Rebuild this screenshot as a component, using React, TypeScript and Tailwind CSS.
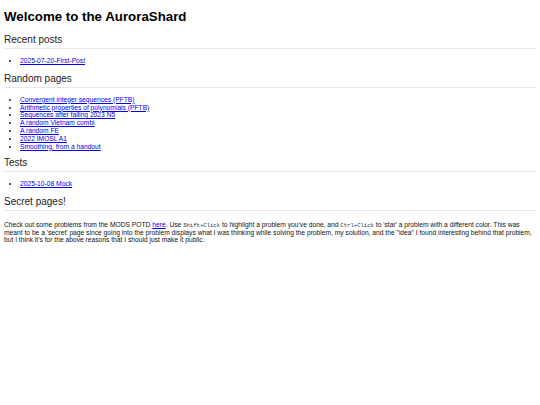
const sans = { fontFamily: '"Liberation Sans", Arial, sans-serif' };

const randomPages = [
  "Convergent integer sequences (PFTB)",
  "Arithmetic properties of polynomials (PFTB)",
  "Sequences after failing 2023 N5",
  "A random Vietnam combi",
  "A random FE",
  "2022 IMOSL A1",
  "Smoothing, from a handout",
];

function Section({
  title,
  gap = "mt-[9px]",
  body = "mt-[8px]",
  children,
}: {
  title: string;
  gap?: string;
  body?: string;
  children: React.ReactNode;
}) {
  return (
    <section className={gap}>
      <h2 className="text-[10px] leading-[12px] text-[#222] pb-[2px] border-b border-[#e8e8e8]">{title}</h2>
      <div className={body}>{children}</div>
    </section>
  );
}

function LinkList({ items }: { items: string[] }) {
  return (
    <ul className="list-disc pl-[16px] text-[6.7px] leading-[7.8px] marker:text-[#222]">
      {items.map((it) => (
        <li key={it} className="leading-[7.8px]">
          <a href="#" className="text-[#0000ee] underline">{it}</a>
        </li>
      ))}
    </ul>
  );
}

function Code({ children }: { children: React.ReactNode }) {
  return <code className="text-[5.6px] leading-none text-[#333]" style={{ fontFamily: '"Liberation Mono", monospace' }}>{children}</code>;
}

export default function App() {
  return (
    <div className="min-h-[405px] w-[540px] bg-white px-[4px] pt-[9px] text-black" style={sans}>
      <h1 className="text-[13.3px] leading-[16px] font-bold">Welcome to the AuroraShard</h1>

      <Section title="Recent posts">
        <LinkList items={["2025-07-20-First-Post"]} />
      </Section>

      <Section title="Random pages" gap="mt-[8px]">
        <LinkList items={randomPages} />
      </Section>

      <Section title="Tests" gap="mt-[7px]">
        <LinkList items={["2025-10-08 Mock"]} />
      </Section>

      <Section title="Secret pages!" gap="mt-[8px]" body="mt-[10px]">
        <p className="text-[6.7px] leading-[7.6px] text-[#111]">
          Check out some problems from the MODS POTD <a href="#" className="text-[#0000ee] underline">here</a>. Use <Code>Shift+Click</Code> to highlight a problem you've done, and <Code>Ctrl+Click</Code> to 'star' a problem with a different color. This was meant to be a 'secret' page since going into the problem displays what I was thinking while solving the problem, my solution, and the "idea" I found interesting behind that problem, but I think it's for the above reasons that I should just make it public.
        </p>
      </Section>
    </div>
  );
}
